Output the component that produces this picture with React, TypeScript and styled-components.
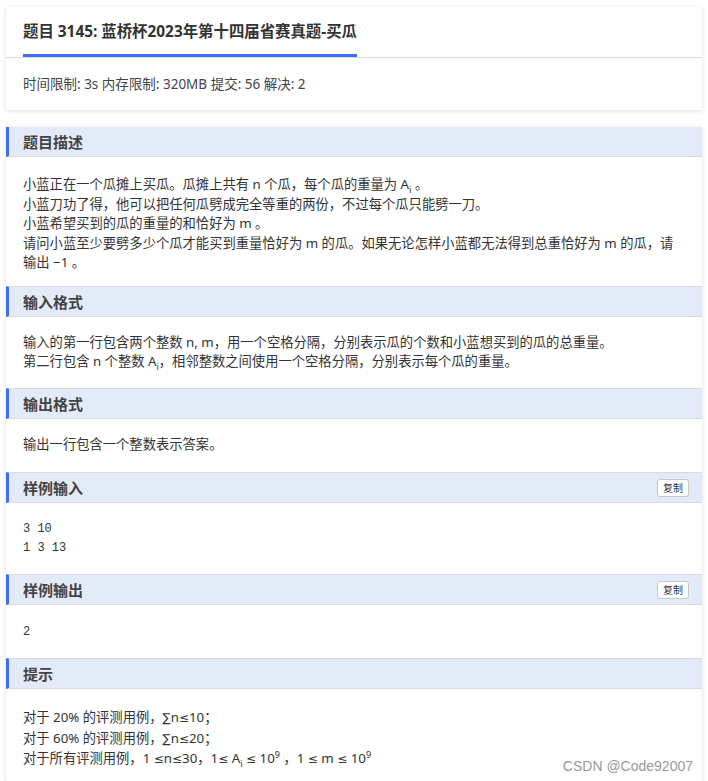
import React from "react";
import styled, { createGlobalStyle } from "styled-components";

const GlobalStyle = createGlobalStyle`
  html, body {
    margin: 0;
    padding: 0;
    background: #ffffff;
  }
  body {
    font-family: "Noto Sans", "Noto Sans CJK SC", sans-serif;
    color: #333;
  }
`;

const Page = styled.div`
  position: relative;
  width: 708px;
  height: 781px;
  padding: 7px 6px 0 6px;
  box-sizing: border-box;
  overflow: hidden;
`;

const Card = styled.div<{ $gap?: number }>`
  background: #fff;
  box-shadow: 0 1px 4px rgba(0, 0, 0, 0.14);
  margin-bottom: ${(p) => p.$gap ?? 0}px;
`;

const TitleBar = styled.div`
  padding: 0 17px;
  border-bottom: 1px solid #dcdcdc;
`;

const Title = styled.h1`
  display: inline-block;
  margin: 0;
  padding: 12px 0 9px;
  font-size: 15.4px;
  line-height: 26px;
  font-weight: 700;
  color: #333;
  border-bottom: 3px solid #3f6ff0;
`;

const Stats = styled.div`
  padding: 16px 17px 16px;
  font-size: 13.5px;
  line-height: 20px;
  color: #444;
`;

const SectionHead = styled.div`
  display: flex;
  align-items: center;
  justify-content: space-between;
  height: 31px;
  box-sizing: border-box;
  padding: 0 13px 0 14px;
  background: #e4ebf8;
  border-left: 3px solid #3f6ff0;
  border-top: 1px solid #d8dbe0;
  border-bottom: 1px solid #d8dbe0;
  font-size: 15px;
  font-weight: 700;
  color: #444;

  &:first-child {
    border-top: none;
    height: 30px;
  }
`;

const CopyButton = styled.button`
  height: 18px;
  width: 32px;
  padding: 0;
  border: 1px solid #c8c8c8;
  border-radius: 3px;
  background: #fff;
  font-family: "Noto Sans CJK SC", sans-serif;
  font-size: 10px;
  line-height: 16px;
  color: #333;
`;

const SectionBody = styled.div<{ $top?: number; $bottom?: number }>`
  padding: ${(p) => p.$top ?? 16}px 17px ${(p) => p.$bottom ?? 16}px;
  font-size: 13.3px;
  line-height: 19.5px;
  color: #333;

  sub {
    font-size: 9px;
    line-height: 0;
  }
  sup {
    font-size: 9px;
    line-height: 0;
  }
`;

const MathSign = styled.span`
  font-family: "DejaVu Sans", sans-serif;
  font-size: 12px;
`;

const Pre = styled.pre`
  margin: 0;
  font-family: "Liberation Mono", "DejaVu Sans Mono", monospace;
  font-size: 12px;
  line-height: 19px;
  color: #333;
`;

const Watermark = styled.div`
  position: absolute;
  right: 15px;
  bottom: 7px;
  font-family: "Liberation Sans", Arial, sans-serif;
  font-size: 14px;
  color: #999;
`;

type Section = {
  title: string;
  copy?: boolean;
  top?: number;
  bottom?: number;
  body: React.ReactNode;
};

const le = <MathSign>≤</MathSign>;

const sections: Section[] = [
  {
    title: "题目描述",
    top: 18,
    bottom: 13,
    body: (
      <>
        小蓝正在一个瓜摊上买瓜。瓜摊上共有 n 个瓜，每个瓜的重量为 A<sub>i</sub> 。
        <br />
        小蓝刀功了得，他可以把任何瓜劈成完全等重的两份，不过每个瓜只能劈一刀。
        <br />
        小蓝希望买到的瓜的重量的和恰好为 m 。
        <br />
        请问小蓝至少要劈多少个瓜才能买到重量恰好为 m 的瓜。如果无论怎样小蓝都无法得到总重恰好为 m 的瓜，请
        <br />
        输出 −1 。
      </>
    ),
  },
  {
    title: "输入格式",
    body: (
      <>
        输入的第一行包含两个整数 n, m，用一个空格分隔，分别表示瓜的个数和小蓝想买到的瓜的总重量。
        <br />
        第二行包含 n 个整数 A<sub>i</sub>，相邻整数之间使用一个空格分隔，分别表示每个瓜的重量。
      </>
    ),
  },
  {
    title: "输出格式",
    bottom: 18,
    body: <>输出一行包含一个整数表示答案。</>,
  },
  {
    title: "样例输入",
    copy: true,
    top: 17,
    body: <Pre>{"3 10\n1 3 13"}</Pre>,
  },
  {
    title: "样例输出",
    copy: true,
    top: 18,
    body: <Pre>2</Pre>,
  },
  {
    title: "提示",
    top: 19,
    bottom: 12,
    body: (
      <>
        对于 20% 的评测用例，<MathSign>∑</MathSign>n{le}10；
        <br />
        对于 60% 的评测用例，<MathSign>∑</MathSign>n{le}20；
        <br />
        对于所有评测用例，1 {le}n{le}30，1{le} A<sub>i</sub> {le} 10<sup>9</sup> ，1 {le} m {le} 10
        <sup>9</sup>
      </>
    ),
  },
];

export default function App() {
  return (
    <Page>
      <GlobalStyle />
      <Card $gap={17}>
        <TitleBar>
          <Title>题目 3145: 蓝桥杯2023年第十四届省赛真题-买瓜</Title>
        </TitleBar>
        <Stats>时间限制: 3s 内存限制: 320MB 提交: 56 解决: 2</Stats>
      </Card>

      <Card>
        {sections.map((s) => (
          <React.Fragment key={s.title}>
            <SectionHead>
              <span>{s.title}</span>
              {s.copy && <CopyButton>复制</CopyButton>}
            </SectionHead>
            <SectionBody $top={s.top} $bottom={s.bottom}>
              {s.body}
            </SectionBody>
          </React.Fragment>
        ))}
      </Card>

      <Watermark>CSDN @Code92007</Watermark>
    </Page>
  );
}
